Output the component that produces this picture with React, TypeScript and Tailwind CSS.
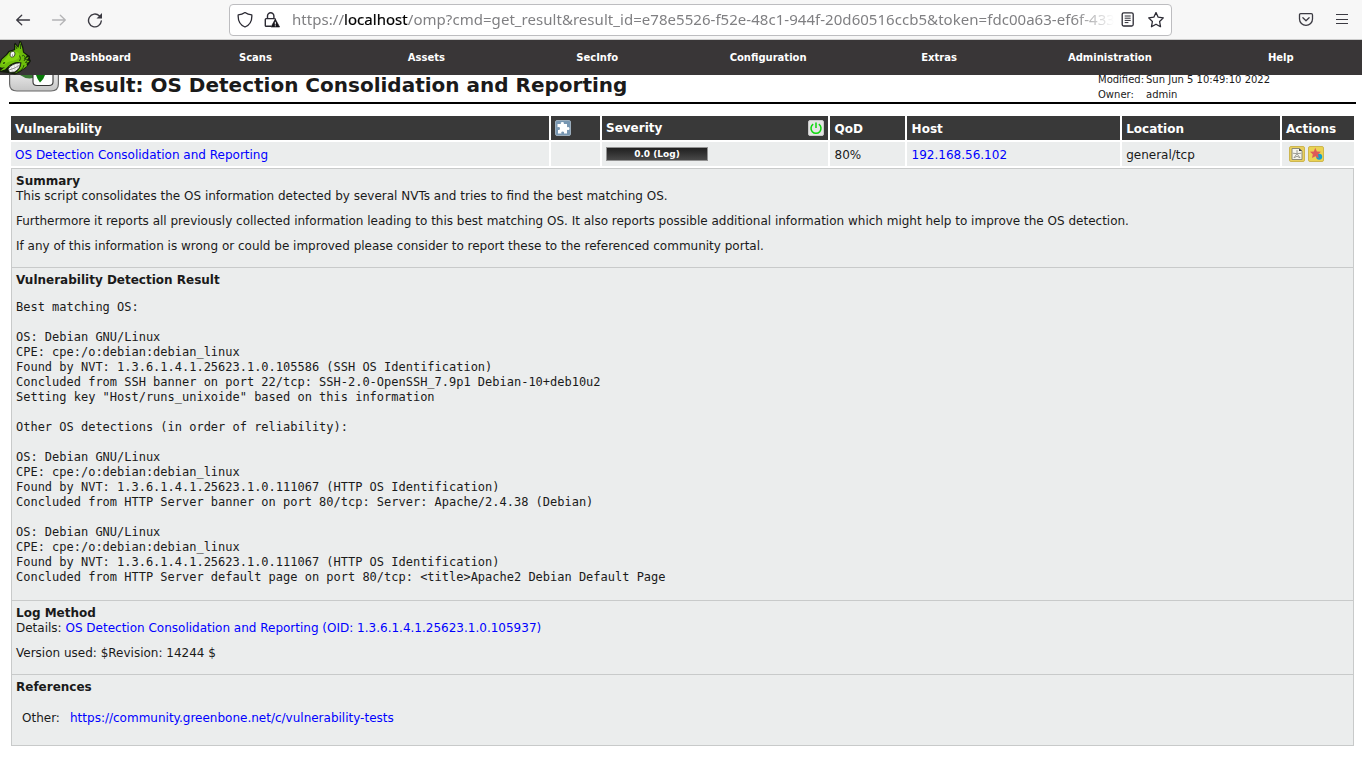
import React from 'react';

const navItems = ['Scans', 'Assets', 'SecInfo', 'Configuration', 'Extras', 'Administration', 'Help'];

const detection = `Best matching OS:

OS: Debian GNU/Linux
CPE: cpe:/o:debian:debian_linux
Found by NVT: 1.3.6.1.4.1.25623.1.0.105586 (SSH OS Identification)
Concluded from SSH banner on port 22/tcp: SSH-2.0-OpenSSH_7.9p1 Debian-10+deb10u2
Setting key "Host/runs_unixoide" based on this information

Other OS detections (in order of reliability):

OS: Debian GNU/Linux
CPE: cpe:/o:debian:debian_linux
Found by NVT: 1.3.6.1.4.1.25623.1.0.111067 (HTTP OS Identification)
Concluded from HTTP Server banner on port 80/tcp: Server: Apache/2.4.38 (Debian)

OS: Debian GNU/Linux
CPE: cpe:/o:debian:debian_linux
Found by NVT: 1.3.6.1.4.1.25623.1.0.111067 (HTTP OS Identification)
Concluded from HTTP Server default page on port 80/tcp: <title>Apache2 Debian Default Page`;

function BrowserBar() {
  return (
    <header className="flex h-10 shrink-0 items-center border-b border-[#cccccc] bg-[#f7f7f7] text-[#2b2a33]">
      <svg className="ml-[15px] h-4 w-4" viewBox="0 0 16 16" fill="none" stroke="#3b3a42" strokeWidth="1.3" strokeLinecap="round" strokeLinejoin="round">
        <path d="M14.5 8H1.7M6.7 3.2L1.7 8L6.7 12.8" />
      </svg>
      <svg className="ml-5 h-4 w-4" viewBox="0 0 16 16" fill="none" stroke="#b4b4b6" strokeWidth="1.3" strokeLinecap="round" strokeLinejoin="round">
        <path d="M1.5 8h12.8M9.3 3.2l5 4.8l-5 4.8" />
      </svg>
      <svg className="ml-5 h-4 w-4" viewBox="0 0 16 16" fill="none" stroke="#3b3a42" strokeWidth="1.4" strokeLinecap="round">
        <path d="M12.3 3.8A6.4 6.4 0 1 0 14.3 9" />
        <path d="M15 1v5.5H9.5z" fill="#3b3a42" stroke="none" />
      </svg>
      <div className="ml-[126px] flex h-8 w-[943px] items-center rounded-[4px] border border-[#bdbdc0] bg-white">
        <svg className="ml-[7px] h-4 w-4 shrink-0" viewBox="0 0 16 16" fill="none" stroke="#2b2a33" strokeWidth="1.3" strokeLinejoin="round">
          <path d="M8 .5C6 1.9 3.7 2.6 1.2 2.8C.8 8.4 3.2 13 8 15C12.8 13 15.2 8.4 14.8 2.8C12.3 2.6 10 1.9 8 .5z" />
        </svg>
        <svg className="ml-[11px] h-4 w-4 shrink-0" viewBox="0 0 16 16">
          <path d="M3.5 7V3.9a3.2 3.2 0 0 1 6.4 0V7M7 14.3H2.2a.9.9 0 0 1-.9-.9V7.5a.9.9 0 0 1 .9-.9h8.4a.9.9 0 0 1 .9.9" fill="none" stroke="#2b2a33" strokeWidth="1.4" />
          <path d="M11.3 7.1L15.6 15H7z" fill="#15141a" stroke="#15141a" strokeWidth=".6" />
          <path d="M11.3 9.8v2.7M11.3 13.3v1" stroke="white" strokeWidth="1" />
        </svg>
        <div className="mb-[2px] ml-[12px] w-[822px] shrink-0 overflow-hidden whitespace-nowrap font-['Noto_Sans',sans-serif] text-[15px] leading-5 tracking-[.042px] text-[#808083] [mask-image:linear-gradient(to_right,black_95%,transparent)]">
          https://<span className="text-black [-webkit-text-stroke:.2px_black]">localhost</span>/omp?cmd=get_result&amp;result_id=e78e5526-f52e-48c1-944f-20d60516ccb5&amp;token=fdc00a63-ef6f-433
        </div>
        <svg className="ml-[6px] h-4 w-4 shrink-0" viewBox="0 0 16 16" fill="none" stroke="#2b2a33" strokeWidth="1.3">
          <rect x="2.2" y=".8" width="11" height="13.2" rx="1.5" />
          <path d="M4.7 4h6M4.7 6.2h6M4.7 8.4h6M4.7 10.6h3.7" strokeWidth="1" />
        </svg>
        <svg className="ml-3 h-4 w-4 shrink-0" viewBox="0 0 16 16" fill="none" stroke="#2b2a33" strokeWidth="1.3" strokeLinejoin="round">
          <path d="M8 .5l2.2 4.7 5.1.7-3.7 3.6.9 5.2L8 12.2l-4.5 2.5.9-5.2L.7 5.9l5.1-.7z" />
        </svg>
      </div>
      <svg className="ml-[126px] h-4 w-4" viewBox="0 0 16 16" fill="none" stroke="#3b3a42" strokeWidth="1.3" strokeLinecap="round" strokeLinejoin="round">
        <path d="M2.7 1.7h10.6a1.2 1.2 0 0 1 1.2 1.2v4a6.5 6.5 0 0 1-13 0v-4a1.2 1.2 0 0 1 1.2-1.2zM4.9 5.8L8 8.7l3.1-2.9" />
      </svg>
      <svg className="ml-5 h-4 w-4" viewBox="0 0 16 16" stroke="#3b3a42" strokeWidth="1.2">
        <path d="M2 2.5h12M2 7.5h12M2 11.5h12" />
      </svg>
    </header>
  );
}

function DragonLogo() {
  return (
    <svg className="h-[35px] w-[31px] shrink-0" viewBox="0 0 31 35">
      <path d="M-1 24L1 19L6 14.5L8.5 11L14 9.2L14 4L15.3 2.8L18 6.2L19.5.7L21.2 1.5L23.3 7L24 12L27.5 14.5L30 16L30 19L31 21L29 24L25.5 28L20 32L15 34.5L8 33L-1 32z" fill="#111a0b" />
      <path d="M0 24L2 19.5L7 15L9.5 12L15.2 10L15.3 4.5L18.3 8L20.2 2L22.2 8L23 12.5L26.8 15.5L25.5 18L28.7 17L27 20.5L29.5 21L26.5 24L27 26L23 29L18 32L14.5 33.5Q21 29 21.5 22.5Q14 20.5 8 26.5L5 29.5L0 31L5 27Q2 28.5 0 27z" fill="#6dbe0a" />
      <path d="M15 11.2Q20 12 19.5 17Q16 21 11 21Q7 22 4 25L1 24L7 17L10 12.5z" fill="#83d510" />
      <path d="M15.7 6L17 9M20.3 4L20.5 9M19.5 15.5Q21.5 18.5 19.5 21M22 16Q24 14 25 17Q26 19 24 21M24 25Q23 30 17 32" fill="none" stroke="#254e0a" strokeWidth="1" />
      <path d="M27 16.5L24.5 19L28 19.5L25.5 22.5L28 23" fill="none" stroke="#172d0b" strokeWidth=".8" />
      <ellipse cx="12.5" cy="14.2" rx="2.4" ry="3" fill="#f5f5f5" stroke="#17260d" strokeWidth=".7" transform="rotate(20 12.5 14.2)" />
      <circle cx="12.5" cy="14.9" r=".5" fill="#222" />
      <ellipse cx="4" cy="23" rx="1.3" ry=".9" fill="#28520a" transform="rotate(-30 4 23)" />
      <path d="M8 29Q12 23 20.5 22.8Q20.5 29 14.5 32L9.5 32.5z" fill="#f5f5f5" stroke="#15210d" strokeWidth=".8" />
      <path d="M9 30Q15 28.5 20 25" fill="none" stroke="#666" strokeWidth=".7" />
      <path d="M11 26.5l1.5 5.3M14 25l1.2 5.5M17 24l.8 5" stroke="#aaa" strokeWidth=".5" />
    </svg>
  );
}

function NavBar() {
  return (
    <nav className="flex h-[35px] shrink-0 items-center overflow-hidden bg-[#393637] text-center text-[10px] font-bold text-white">
      <DragonLogo />
      <span className="w-[139px] shrink-0">Dashboard</span>
      {navItems.map((item) => (
        <span key={item} className="w-[170.9px] shrink-0">{item}</span>
      ))}
    </nav>
  );
}

function ResultTitle() {
  return (
    <section className="mr-[6px] ml-[9px] flex h-[29px] shrink-0 border-b-2 border-black">
      <svg className="h-[18px] w-[51px] shrink-0" viewBox="0 0 51 18">
        <defs>
          <linearGradient id="button" x1="0" x2="0" y1="0" y2="1">
            <stop stopColor="#eeeeee" />
            <stop offset="1" stopColor="#c5c5c5" />
          </linearGradient>
        </defs>
        <path d="M.6-5V9Q.6 16 8 16H42Q49.4 16 49.4 9V-5z" fill="url(#button)" stroke="#686868" strokeWidth="1.2" />
        <path d="M11 0Q17 4.5 24 3V0z" fill="#397832" />
        <path d="M24-3V7Q24 10.5 28 10.5H40Q44 10.5 44 7V-3z" fill="white" stroke="#333" strokeWidth="1.1" />
        <path d="M27 0Q28.5 5 31 7.5Q34.5 5 36 0z" fill="#087b08" />
      </svg>
      <h1 className="ml-[4px] w-[1034px] text-[20px] leading-5 font-bold whitespace-nowrap">Result: OS Detection Consolidation and Reporting</h1>
      <dl className="-mt-[3px] grid h-[30px] grid-cols-[48px_1fr] text-[10px] leading-[15px] whitespace-nowrap [clip-path:inset(3px_0_0_0)]">
        <dt>Modified:</dt><dd>Sun Jun 5 10:49:10 2022</dd>
        <dt>Owner:</dt><dd>admin</dd>
      </dl>
    </section>
  );
}

function PuzzleIcon() {
  return (
    <svg className="h-4 w-4" viewBox="0 0 16 16">
      <rect x=".5" y=".5" width="15" height="15" rx="1.5" fill="#7897b2" stroke="#9badbc" />
      <path d="M2.5 4H6Q5 2 7.3 2T8.7 4H12V7.2Q14.5 6.2 14.5 8.5T12 9.7V13.5H9Q9.7 11.5 7.7 11.5T6.5 13.5H3V10Q5 10.5 5 8.5T2.5 7.3z" fill="white" />
    </svg>
  );
}

function PowerIcon() {
  return (
    <svg className="h-4 w-4" viewBox="0 0 16 16">
      <rect x=".5" y=".5" width="15" height="15" rx="1.5" fill="#e4e4e4" stroke="#c8c8c8" />
      <path d="M5.2 4.2A5 5 0 1 0 10.8 4.2M8 2.5V8" fill="none" stroke="#0bd80b" strokeWidth="1.5" />
    </svg>
  );
}

function NoteIcon() {
  return (
    <svg className="h-4 w-4" viewBox="0 0 16 16">
      <rect x=".5" y=".5" width="15" height="15" rx="1.5" fill="#e8cf5f" stroke="#cdb64f" />
      <path d="M3 2.5h7.5L13 5v8.5H3z" fill="#f5f5ed" stroke="#8d8a78" />
      <path d="M10 2.5V5h3z" fill="#444" />
      <path d="M8 4v3M3.8 7.2L8 7.7l4.2-.5M8 7.7L4.8 12M8 7.7l3.2 4.3M5 11.8l3-1.5 3 1.5" fill="none" stroke="#93938c" strokeWidth=".9" />
    </svg>
  );
}

function OverrideIcon() {
  return (
    <svg className="h-4 w-4" viewBox="0 0 16 16">
      <rect x=".5" y=".5" width="15" height="15" rx="1.5" fill="#ead352" stroke="#cdb64f" />
      <circle cx="11.2" cy="10.8" r="3" fill="#129fcb" />
      <path d="M7.2 1.7l1.7 3.8 4 .2L10 8.5l.8 3.9-3.4-2.1L4 12l.8-3.8L1.9 5.7l4-.2z" fill="#dd5b59" />
    </svg>
  );
}

function ResultTable() {
  return (
    <div className="grid w-[1343px] shrink-0 grid-cols-[538px_49px_226px_75px_213px_158px_72px] grid-rows-[24px_24px] gap-[2px] text-[12px] [&>*]:flex [&>*]:items-center [&>*]:px-1 [&>*:nth-child(-n+7)]:bg-[#393939] [&>*:nth-child(-n+7)]:font-bold [&>*:nth-child(-n+7)]:text-white [&>*:nth-child(n+8)]:bg-[#ebeded]">
      <div className="pt-px">Vulnerability</div>
      <div><PuzzleIcon /></div>
      <div className="justify-between"><span>Severity</span><PowerIcon /></div>
      <div className="pt-px pl-[4.6px]!">QoD</div>
      <div className="pt-px pl-[4.6px]!">Host</div>
      <div className="pt-px pl-[4.2px]!">Location</div>
      <div className="pt-px">Actions</div>
      <div className="pt-px"><a className="text-[#0000ff]">OS Detection Consolidation and Reporting</a></div>
      <div />
      <div><span className="h-[14px] w-[102px] border border-[#929292] bg-linear-to-b from-[#202020] to-[#494949] text-center text-[9px] leading-[12px] font-bold text-white">0.0 (Log)</span></div>
      <div className="pt-px pl-[4.6px]!">80%</div>
      <div className="pt-px pl-[4.6px]!"><a className="text-[#0000ff]">192.168.56.102</a></div>
      <div className="pt-px pl-[4.2px]!">general/tcp</div>
      <div className="gap-[3px] pl-[7px]!"><NoteIcon /><OverrideIcon /></div>
    </div>
  );
}

export default function App() {
  return (
    <main className="flex h-[773px] w-[1362px] flex-col overflow-hidden bg-white font-['DejaVu_Sans',sans-serif] text-[#1a1a1a]">
      <BrowserBar />
      <NavBar />
      <ResultTitle />
      <div className="mt-3 ml-[11px] flex w-[1343px] flex-col">
        <ResultTable />
        <article className="mt-[2px] h-[578px] border border-[#c8caca] bg-[#ebeded] text-[12px] leading-[15px]">
          <section className="h-[99px] border-b border-[#c8caca] px-1 pt-[5px]">
            <h2 className="font-bold">Summary</h2>
            <p className="mb-[10px]">This script consolidates the OS information detected by several NVTs and tries to find the best matching OS.</p>
            <p className="mb-[10px]">Furthermore it reports all previously collected information leading to this best matching OS. It also reports possible additional information which might help to improve the OS detection.</p>
            <p>If any of this information is wrong or could be improved please consider to report these to the referenced community portal.</p>
          </section>
          <section className="h-[333px] border-b border-[#c8caca] px-1 pt-[5px]">
            <h2 className="font-bold">Vulnerability Detection Result</h2>
            <pre className="mt-3 font-['DejaVu_Sans_Mono',monospace] text-[12px] leading-[15px] tracking-[-.008px]">{detection}</pre>
          </section>
          <section className="h-[74px] border-b border-[#c8caca] px-1 pt-[5px]">
            <h2 className="font-bold">Log Method</h2>
            <p className="mb-[10px]">Details: <a className="text-[#0000ff]">OS Detection Consolidation and Reporting (OID: 1.3.6.1.4.1.25623.1.0.105937)</a></p>
            <p>Version used: $Revision: 14244 $</p>
          </section>
          <section className="px-1 pt-[5px]">
            <h2 className="font-bold">References</h2>
            <div className="mt-4 flex pl-[6px]">
              <span className="w-12">Other:</span>
              <a className="text-[#0000ff]">https://community.greenbone.net/c/vulnerability-tests</a>
            </div>
          </section>
        </article>
      </div>
    </main>
  );
}
